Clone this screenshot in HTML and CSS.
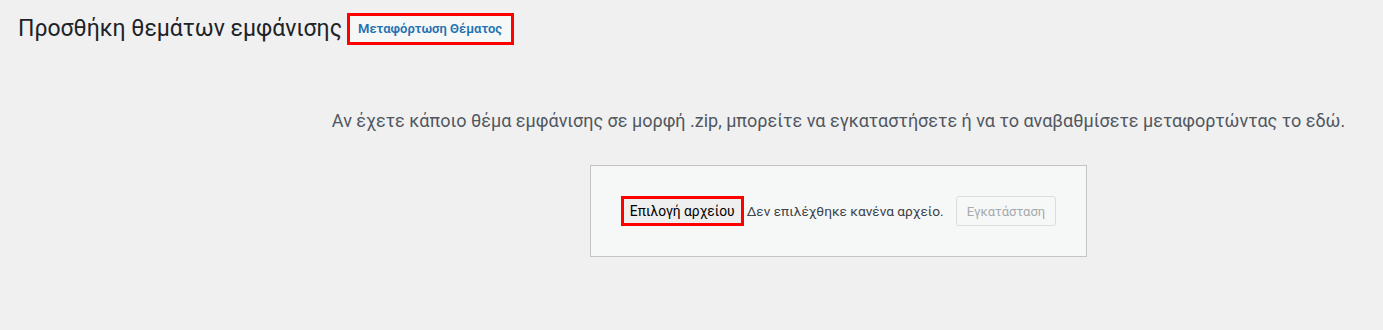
FILE: index.html
```html
<!DOCTYPE html>
<html lang="el">
<head>
    <meta charset="UTF-8">
    <meta name="viewport" content="width=device-width, initial-scale=1.0">
    <title>Προσθήκη θεμάτων εμφάνισης</title>
    <link rel="stylesheet" href="styles.css">
</head>
<body>
    <div class="wrap">
        <div class="page-header">
            <h1 class="heading-inline">Προσθήκη θεμάτων εμφάνισης</h1>
            <a href="#" class="page-title-action">Μεταφόρτωση Θέματος</a>
        </div>

        <div class="upload-theme">
            <p class="install-help">Αν έχετε κάποιο θέμα εμφάνισης σε μορφή .zip, μπορείτε να εγκαταστήσετε ή να το αναβαθμίσετε μεταφορτώντας το εδώ.</p>
            <form class="upload-form">
                <label class="file-btn">Επιλογή αρχείου</label>
                <span class="file-name">Δεν επιλέχθηκε κανένα αρχείο.</span>
                <button type="button" class="button" disabled>Εγκατάσταση</button>
            </form>
        </div>
    </div>
</body>
</html>
```

FILE: styles.css
```css
body {
    margin: 0;
    padding: 0;
    background-color: #f0f0f1;
    color: #3c434a;
    font-family: Roboto, "Noto Sans", sans-serif;
    font-size: 14px;
}

.wrap {
    padding: 13px 0 0 18px;
}

/* Page title */
.page-header {
    display: flex;
    align-items: center;
}

.heading-inline {
    margin: 0 5px 0 0;
    font-size: 23px;
    font-weight: 400;
    line-height: 32px;
    color: #1d2327;
}

.page-title-action {
    display: inline-block;
    padding: 0 9px 0 8px;
    height: 26px;
    line-height: 26px;
    border: 3px solid #ff0000;
    background-color: #f6f7f7;
    color: #2271b1;
    font-size: 13px;
    font-weight: 600;
    text-decoration: none;
}

/* Upload area */
.upload-theme {
    padding-left: 276px;
    text-align: center;
}

.install-help {
    margin: 64px 0 0;
    font-size: 18px;
    line-height: 24px;
    color: #50575e;
}

.upload-form {
    display: inline-flex;
    align-items: center;
    margin-top: 32px;
    padding: 30px;
    border: 1px solid #c3c4c7;
    background-color: #f6f7f7;
}

.file-btn {
    box-sizing: border-box;
    height: 30px;
    padding: 0 6px;
    line-height: 24px;
    border: 3px solid #ff0000;
    background-color: #efefef;
    color: #000;
    font-size: 13.8px;
}

.file-name {
    margin-left: 3px;
    color: #3c434a;
    font-size: 13.7px;
}

.button {
    box-sizing: border-box;
    height: 30px;
    margin-left: 12px;
    padding: 0 10px;
    border: 1px solid #dcdcde;
    border-radius: 3px;
    background-color: #f6f7f7;
    color: #a7aaad;
    font-family: inherit;
    font-size: 13px;
}
```
